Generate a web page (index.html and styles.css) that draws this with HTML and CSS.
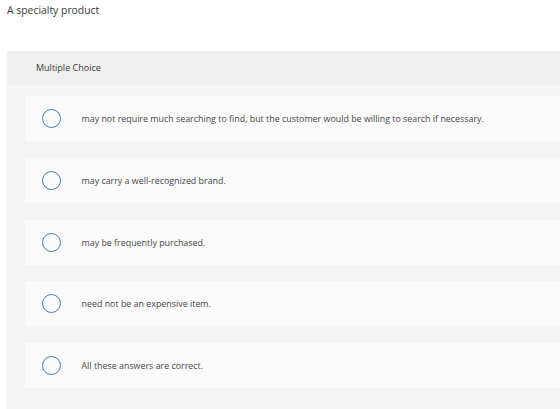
FILE: index.html
```html
<html><head><meta charset="UTF-8">
    <link rel="stylesheet" href="styles.css">
</head>
<body>
    <div class="pytanie">A specialty product</div>

    <div class="panel">
        <div class="naglowek">Multiple Choice</div>
        <div class="odpowiedzi">
            <div class="odpowiedz"><span class="kolko"></span><span>may not require much searching to find, but the customer would be willing to search if necessary.</span></div>
            <div class="odpowiedz"><span class="kolko"></span><span>may carry a well-recognized brand.</span></div>
            <div class="odpowiedz"><span class="kolko"></span><span>may be frequently purchased.</span></div>
            <div class="odpowiedz"><span class="kolko"></span><span>need not be an expensive item.</span></div>
            <div class="odpowiedz"><span class="kolko"></span><span>All these answers are correct.</span></div>
        </div>
    </div>
</body></html>
```

FILE: styles.css
```css
body {
    margin: 0;
    padding: 0 0 0 7px;
    font-family: "Open Sans", sans-serif;
    color: #3a3a3a;
    background-color: white;
    overflow: hidden;
    height: 409px;
}

.pytanie {
    font-size: 10.4px;
    line-height: 12px;
    padding-top: 4px;
    height: 47px;
}

.panel {
    background-color: #f4f4f4;
    height: 362px;
}

.naglowek {
    background-color: #efefef;
    height: 34px;
    line-height: 34px;
    padding-left: 29px;
    font-size: 9px;
}

.odpowiedzi {
    display: flex;
    flex-direction: column;
    gap: 16.75px;
    padding: 11px 0 0 18px;
}

.odpowiedz {
    height: 45px;
    background-color: #fafafa;
    display: flex;
    align-items: center;
    padding-left: 17px;
    font-size: 8.9px;
    color: #484848;
}

.kolko {
    width: 17px;
    height: 17px;
    border: 1.25px solid #4a7cb2;
    border-radius: 50%;
    margin-right: 20.5px;
    flex-shrink: 0;
}
```
